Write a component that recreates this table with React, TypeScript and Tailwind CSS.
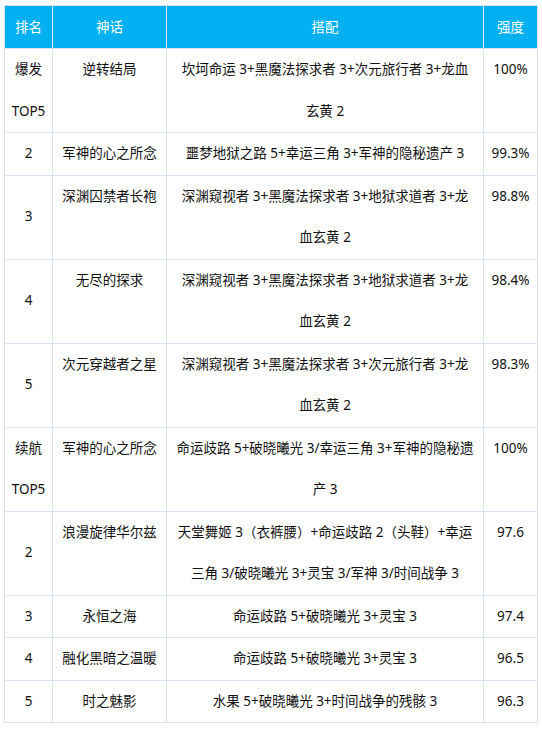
type Row = {
  rank: string[];
  myth: string;
  combo: string[];
  score: string;
};

const rows: Row[] = [
  { rank: ['爆发', 'TOP5'], myth: '逆转结局', combo: ['坎坷命运 3+黑魔法探求者 3+次元旅行者 3+龙血', '玄黄 2'], score: '100%' },
  { rank: ['2'], myth: '军神的心之所念', combo: ['噩梦地狱之路 5+幸运三角 3+军神的隐秘遗产 3'], score: '99.3%' },
  { rank: ['3'], myth: '深渊囚禁者长袍', combo: ['深渊窥视者 3+黑魔法探求者 3+地狱求道者 3+龙', '血玄黄 2'], score: '98.8%' },
  { rank: ['4'], myth: '无尽的探求', combo: ['深渊窥视者 3+黑魔法探求者 3+地狱求道者 3+龙', '血玄黄 2'], score: '98.4%' },
  { rank: ['5'], myth: '次元穿越者之星', combo: ['深渊窥视者 3+黑魔法探求者 3+次元旅行者 3+龙', '血玄黄 2'], score: '98.3%' },
  { rank: ['续航', 'TOP5'], myth: '军神的心之所念', combo: ['命运歧路 5+破晓曦光 3/幸运三角 3+军神的隐秘遗', '产 3'], score: '100%' },
  { rank: ['2'], myth: '浪漫旋律华尔兹', combo: ['天堂舞姬 3（衣裤腰）+命运歧路 2（头鞋）+幸运', '三角 3/破晓曦光 3+灵宝 3/军神 3/时间战争 3'], score: '97.6' },
  { rank: ['3'], myth: '永恒之海', combo: ['命运歧路 5+破晓曦光 3+灵宝 3'], score: '97.4' },
  { rank: ['4'], myth: '融化黑暗之温暖', combo: ['命运歧路 5+破晓曦光 3+灵宝 3'], score: '96.5' },
  { rank: ['5'], myth: '时之魅影', combo: ['水果 5+破晓曦光 3+时间战争的残骸 3'], score: '96.3' },
];

function Lines({ lines }: { lines: string[] }) {
  return (
    <>
      {lines.map((l, i) => (
        <span key={i} className="block whitespace-nowrap">
          {l}
        </span>
      ))}
    </>
  );
}

export default function App() {
  const cell = 'border border-[#d9e2f3] text-center px-1';
  return (
    <div className="min-h-[729px] bg-white pl-[4px] pt-[5px] font-['Noto_Sans','Noto_Sans_CJK_SC',sans-serif] text-[13.5px] text-[#111]">
      <table className="w-[533px] table-fixed border-collapse leading-[41.5px]">
        <colgroup>
          <col className="w-[48px]" />
          <col className="w-[114px]" />
          <col className="w-[317px]" />
          <col className="w-[54px]" />
        </colgroup>
        <thead>
          <tr className="bg-[#00b0f0] text-white leading-[42px]">
            <th className={`${cell} font-normal`}>排名</th>
            <th className={`${cell} font-normal`}>神话</th>
            <th className={`${cell} font-normal`}>搭配</th>
            <th className={`${cell} font-normal`}>强度</th>
          </tr>
        </thead>
        <tbody>
          {rows.map((r, i) => (
            <tr key={i}>
              <td className={`${cell} align-middle`}>
                <Lines lines={r.rank} />
              </td>
              <td className={`${cell} align-top`}>{r.myth}</td>
              <td className={`${cell} align-top`}>
                <Lines lines={r.combo} />
              </td>
              <td className={`${cell} align-top`}>{r.score}</td>
            </tr>
          ))}
        </tbody>
      </table>
    </div>
  );
}
